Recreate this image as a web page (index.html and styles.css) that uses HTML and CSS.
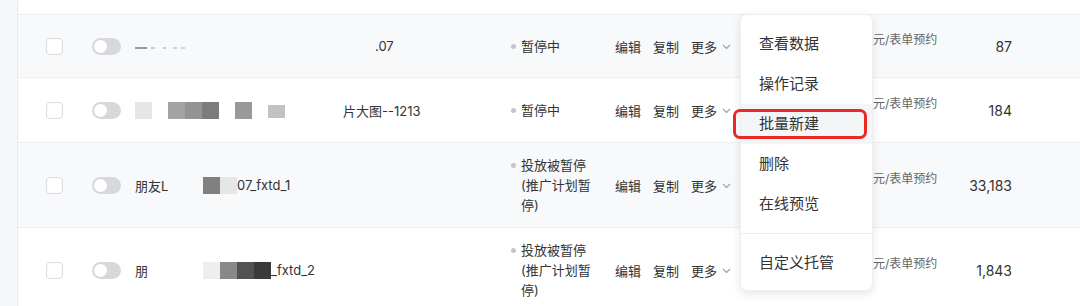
FILE: index.html
```html
<!DOCTYPE html>
<html lang="zh">
<head>
<meta charset="utf-8">
<title>列表</title>
<link rel="stylesheet" href="styles.css">
</head>
<body>
<div class="page">
  <aside class="side"></aside>
  <div class="table">
    <div class="row row--top"></div>

    <div class="row row--grey row--h62">
      <div class="cell-check"><span class="checkbox"></span></div>
      <div class="cell-toggle"><span class="toggle"></span></div>
      <div class="cell-name">
        <span class="smudge"></span>
        <span class="name-tail tail-07">.07</span>
      </div>
      <div class="cell-status"><span class="dot"></span><span class="status-text">暂停中</span></div>
      <div class="cell-actions"><span>编辑</span><span>复制</span><span class="more">更多<svg class="chev" width="9" height="6" viewBox="0 0 9 6"><path d="M1 1l3.5 3.5L8 1" fill="none" stroke="#9a9da3" stroke-width="1.1"/></svg></span></div>
      <div class="cell-bid"><span class="bid">元/表单预约</span></div>
      <div class="cell-num">87</div>
    </div>

    <div class="row row--h64">
      <div class="cell-check"><span class="checkbox"></span></div>
      <div class="cell-toggle"><span class="toggle"></span></div>
      <div class="cell-name">
        <span class="mosaic">
          <i class="m m-e6"></i>
        </span>
        <span class="mosaic gap16">
          <i class="m m-a3"></i><i class="m m-93"></i><i class="m m-7c"></i>
        </span>
        <span class="mosaic gap16">
          <i class="m m-99"></i>
        </span>
        <span class="mosaic gap16">
          <i class="m m-c2 m-short"></i>
        </span>
        <span class="name-tail tail-1213">片大图--1213</span>
      </div>
      <div class="cell-status"><span class="dot"></span><span class="status-text">暂停中</span></div>
      <div class="cell-actions"><span>编辑</span><span>复制</span><span class="more">更多<svg class="chev" width="9" height="6" viewBox="0 0 9 6"><path d="M1 1l3.5 3.5L8 1" fill="none" stroke="#9a9da3" stroke-width="1.1"/></svg></span></div>
      <div class="cell-bid"><span class="bid">元/表单预约</span></div>
      <div class="cell-num">184</div>
    </div>

    <div class="row row--grey row--h84">
      <div class="cell-check"><span class="checkbox"></span></div>
      <div class="cell-toggle"><span class="toggle"></span></div>
      <div class="cell-name">
        <span class="name-head">朋友L</span>
        <span class="mosaic">
          <i class="m m-80"></i><i class="m m-e6"></i>
        </span>
        <span class="name-tail">07_fxtd_1</span>
      </div>
      <div class="cell-status"><span class="dot"></span><span class="status-text">投放被暂停<br>(推广计划暂停)</span></div>
      <div class="cell-actions"><span>编辑</span><span>复制</span><span class="more">更多<svg class="chev" width="9" height="6" viewBox="0 0 9 6"><path d="M1 1l3.5 3.5L8 1" fill="none" stroke="#9a9da3" stroke-width="1.1"/></svg></span></div>
      <div class="cell-bid"><span class="bid">元/表单预约</span></div>
      <div class="cell-num">33,183</div>
    </div>

    <div class="row row--h84">
      <div class="cell-check"><span class="checkbox"></span></div>
      <div class="cell-toggle"><span class="toggle"></span></div>
      <div class="cell-name">
        <span class="name-head">朋</span>
        <span class="mosaic">
          <i class="m m-ee"></i><i class="m m-88"></i><i class="m m-52"></i><i class="m m-3a"></i>
        </span>
        <span class="name-tail">_fxtd_2</span>
      </div>
      <div class="cell-status"><span class="dot"></span><span class="status-text">投放被暂停<br>(推广计划暂停)</span></div>
      <div class="cell-actions"><span>编辑</span><span>复制</span><span class="more">更多<svg class="chev" width="9" height="6" viewBox="0 0 9 6"><path d="M1 1l3.5 3.5L8 1" fill="none" stroke="#9a9da3" stroke-width="1.1"/></svg></span></div>
      <div class="cell-bid"><span class="bid">元/表单预约</span></div>
      <div class="cell-num">1,843</div>
    </div>
  </div>

  <div class="menu">
    <div class="menu-group">
      <div class="menu-item">查看数据</div>
      <div class="menu-item">操作记录</div>
      <div class="menu-item is-hover">批量新建</div>
      <div class="menu-item">删除</div>
      <div class="menu-item">在线预览</div>
    </div>
    <div class="menu-group">
      <div class="menu-item">自定义托管</div>
    </div>
  </div>
  <div class="highlight"></div>
</div>
</body>
</html>
```

FILE: styles.css
```css
* { box-sizing: border-box; }

html, body {
  margin: 0;
  padding: 0;
  background: #ffffff;
}

body {
  font-family: "Inter", "Noto Sans CJK SC", sans-serif;
  color: #2f2f2f;
  font-size: 13px;
  width: 1080px;
  height: 306px;
  overflow: hidden;
}

.page {
  position: relative;
  display: flex;
  height: 306px;
}

.side {
  width: 18px;
  flex: none;
  background: #f6f7f9;
  border-right: 1px solid #e9ebef;
}

.table {
  flex: 1;
  display: flex;
  flex-direction: column;
}

.row {
  display: grid;
  grid-template-columns: 74px 43px 375px 105px 258px 80px 59px 1fr;
  align-items: center;
  border-bottom: 1px solid #eceef2;
  flex: none;
}

.row--top { height: 15px; display: block; }
.row--grey { background: #f8f9fb; }
.row--h62 { height: 63px; }
.row--h64 { height: 65px; }
.row--h84 { height: 85px; }

.cell-check { padding-left: 28px; display: flex; }

.checkbox {
  width: 17px;
  height: 17px;
  border: 1px solid #d8dade;
  border-radius: 4px;
  background: #ffffff;
}

.cell-toggle { display: flex; }

.toggle {
  position: relative;
  width: 29px;
  height: 17px;
  border-radius: 9px;
  background: #d6d8dd;
}

.toggle::after {
  content: "";
  position: absolute;
  left: 2px;
  top: 2px;
  width: 13px;
  height: 13px;
  border-radius: 50%;
  background: #ffffff;
}

.cell-name {
  display: flex;
  align-items: center;
  white-space: nowrap;
  font-size: 13px;
  color: #333;
}

.smudge {
  width: 52px;
  height: 2px;
  background: linear-gradient(90deg, #999 0 12px, transparent 12px 16px, #ccc 16px 20px, transparent 20px 28px, #ccc 28px 31px, transparent 31px 38px, #d4d4d4 38px 42px, transparent 42px 46px, #d4d4d4 46px 50px, transparent 50px);
  margin-top: 4px;
}

.tail-07 { margin-left: 188px; }
.tail-1213 { margin-left: 58px; }

.mosaic { display: flex; height: 17px; }
.gap16 { margin-left: 16px; }

.m { display: block; width: 17px; height: 17px; }
.m-short { height: 13px; margin-top: 3px; }
.m-e6 { background: #e6e6e6; }
.m-a3 { background: #a3a3a3; }
.m-93 { background: #939393; }
.m-7c { background: #7c7c7c; }
.m-99 { background: #999999; }
.m-c2 { background: #c2c2c2; }
.m-80 { background: #808080; }
.m-ee { background: #eeeeee; }
.m-88 { background: #888888; }
.m-52 { background: #525252; }
.m-3a { background: #3a3a3a; }

.name-head { width: 68px; }

.cell-status {
  display: flex;
  align-items: flex-start;
  padding-left: 1px;
}

.dot {
  flex: none;
  width: 5px;
  height: 5px;
  border-radius: 50%;
  background: #c3c6cc;
  margin-top: 8px;
  margin-right: 5px;
}

.status-text {
  width: 76px;
  line-height: 20px;
  font-size: 13px;
  color: #333;
}

.cell-actions {
  display: flex;
  gap: 12px;
  font-size: 13px;
  color: #333;
}

.more { display: flex; align-items: center; gap: 5px; }
.chev { margin-top: 2px; }

.cell-bid {
  display: flex;
}

.bid {
  font-size: 12px;
  color: #666;
  margin-bottom: 16px;
  white-space: nowrap;
}

.cell-num {
  text-align: right;
  font-size: 14px;
  color: #333;
}

.menu {
  position: absolute;
  left: 740px;
  top: 14px;
  width: 133px;
  height: 277px;
  background: #ffffff;
  border: 1px solid #eceef1;
  border-radius: 7px;
  box-shadow: 0 3px 10px rgba(0, 0, 0, 0.10);
}

.menu-group {
  padding: 9px 0;
}

.menu-group + .menu-group {
  border-top: 1px solid #e9ebef;
}

.menu-item {
  height: 40px;
  line-height: 40px;
  padding-left: 18px;
  font-size: 15px;
  color: #333;
}

.menu-item.is-hover { background: #f4f5f7; }

.highlight {
  position: absolute;
  left: 733px;
  top: 109px;
  width: 134px;
  height: 30px;
  border: 3px solid #ea2a22;
  border-radius: 7px;
}
```
